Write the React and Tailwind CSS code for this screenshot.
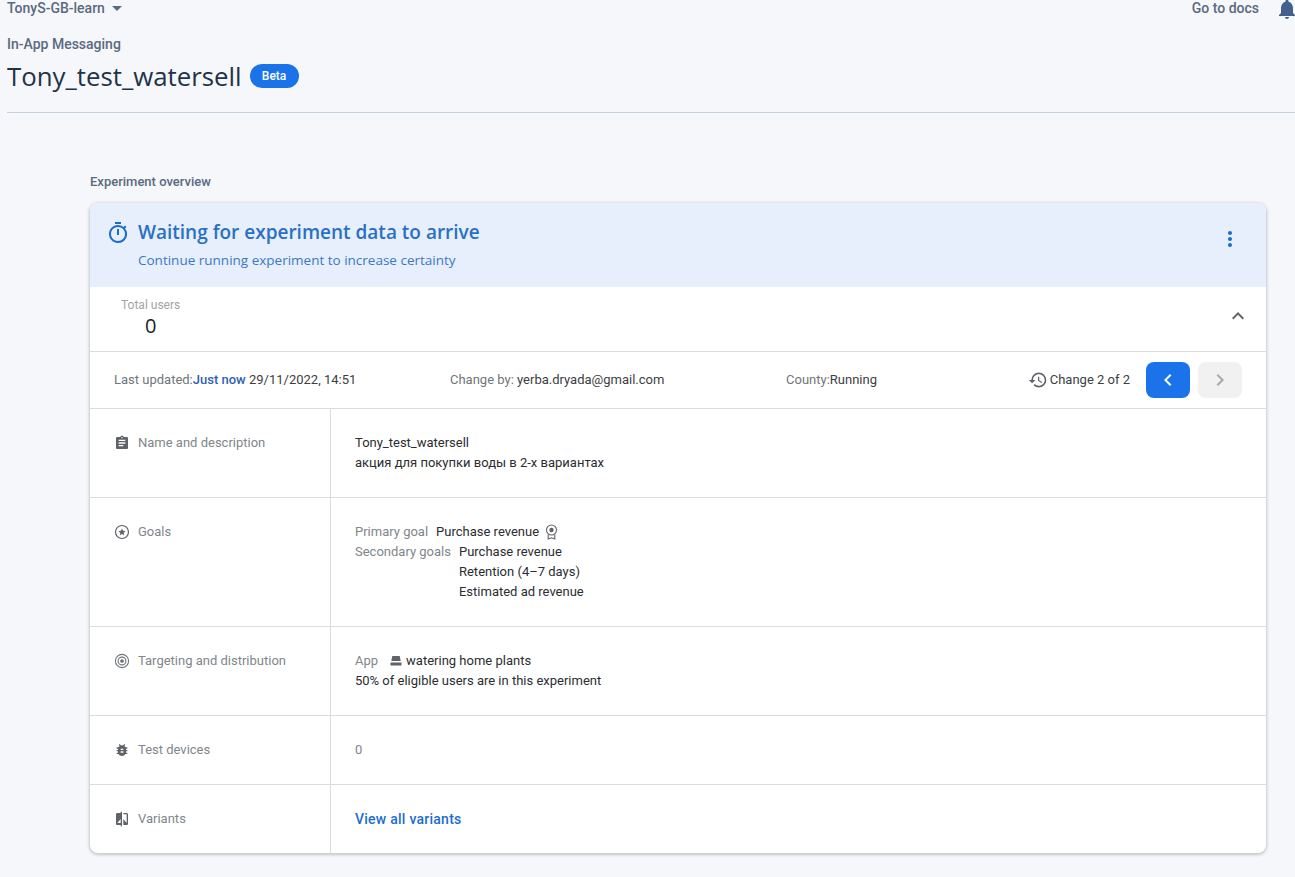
import React from 'react';
import {
  MdArrowDropDown,
  MdNotifications,
  MdOutlineTimer,
  MdMoreVert,
  MdExpandLess,
  MdHistory,
  MdChevronLeft,
  MdChevronRight,
  MdAssignment,
  MdBugReport,
  MdCompare
} from 'react-icons/md';

const GoalsIcon = () => (
  <svg width="16" height="16" viewBox="0 0 16 16" fill="none" stroke="#5f6368">
    <circle cx="8" cy="8" r="6.5" strokeWidth="1.2" />
    <path
      d="M8 4.4l1.05 2.35 2.55.27-1.9 1.7.53 2.5L8 9.95l-2.23 1.27.53-2.5-1.9-1.7 2.55-.27z"
      fill="#5f6368"
      stroke="none"
    />
  </svg>
);

const TargetIcon = () => (
  <svg width="16" height="16" viewBox="0 0 16 16" fill="none" stroke="#70757a" strokeWidth="1.1">
    <circle cx="8" cy="8" r="6.6" />
    <circle cx="8" cy="8" r="3.9" />
    <circle cx="8" cy="8" r="1.3" fill="#70757a" />
  </svg>
);

const MedalIcon = () => (
  <svg width="13" height="16" viewBox="0 0 13 16" fill="none" stroke="#5f6368" strokeWidth="1.1">
    <circle cx="6.5" cy="6" r="5" />
    <circle cx="6.5" cy="6" r="2.2" fill="#5f6368" stroke="none" />
    <path d="M3.2 10.5v4.5l3.3-1.2 3.3 1.2v-4.5" />
  </svg>
);

const AppIcon = () => (
  <svg width="12" height="10" viewBox="0 0 12 10" fill="#5f6368">
    <path d="M2.3 0h7.4l1 5H1.3z" />
    <rect x="0.5" y="6.5" width="11" height="3" />
  </svg>
);

function Row({ icon, label, className, children }) {
  return (
    <div className={`flex border-t border-[#dadce0] ${className}`}>
      <div className="w-[240px] shrink-0 flex items-start gap-[8px] pl-[24px] pt-[24px] text-[13px] leading-[20px] text-[#80868b]">
        <span className="w-[16px] h-[20px] flex items-center justify-center text-[#5f6368]">{icon}</span>
        {label}
      </div>
      <div className="flex-1 border-l border-[#dadce0] pl-[24px] pt-[24px] text-[13px] leading-[20px] text-[#2b2d30]">
        {children}
      </div>
    </div>
  );
}

export default function App() {
  return (
    <div className="min-h-[877px] bg-[#f5f7fa] font-['Roboto',sans-serif] overflow-hidden">
      <div className="h-[113px] ml-[7px] border-b border-[#c5d0de]">
        <div className="flex items-start justify-between h-[16px]">
          <div className="flex items-start text-[14px] leading-[16px] font-medium text-[#5a6a80]">
            TonyS-GB-learn
            <MdArrowDropDown className="text-[24px] mt-[-4px]" />
          </div>
          <div className="flex items-start">
            <span className="text-[14px] leading-[16px] font-medium text-[#5a6a80]">Go to docs</span>
            <MdNotifications className="ml-[16px] mt-[-3px] mr-[-4px] text-[24px] text-[#42618c] shrink-0" />
          </div>
        </div>
        <div className="mt-[20px] text-[14px] leading-[16px] font-medium text-[#5a6a80]">In-App Messaging</div>
        <div className="mt-[8px] flex items-center">
          <span className="font-['Open_Sans',sans-serif] font-medium text-[25.8px] leading-[32px] text-[#1f3349]">Tony_test_watersell</span>
          <span className="ml-[8px] h-[24px] w-[49px] rounded-full bg-[#1a73e8] text-white text-[12px] font-medium flex items-center justify-center">
            Beta
          </span>
        </div>
      </div>

      <div className="ml-[90px] w-[1176px] mt-[61px]">
        <div className="text-[13px] leading-[16px] font-medium text-[#5a6a80]">Experiment overview</div>
        <div className="mt-[13px] bg-white rounded-[8px] shadow-[0_1px_3px_1px_rgba(60,64,67,0.25)] overflow-hidden">
          <div className="h-[84px] bg-[#e6effb] flex items-start pl-[16px] pr-[24px]">
            <MdOutlineTimer className="text-[24px] text-[#1a6dd0] mt-[18px] shrink-0" />
            <div className="ml-[8px] flex-1">
              <div className="mt-[17px] font-['Open_Sans',sans-serif] font-semibold text-[19px] leading-[24px] text-[#2a6fc4]">
                Waiting for experiment data to arrive
              </div>
              <div className="mt-[6px] text-[13.5px] leading-[20px] text-[#3c78c8] font-['Open_Sans',sans-serif]">
                Continue running experiment to increase certainty
              </div>
            </div>
            <MdMoreVert className="text-[24px] text-[#1a6dd0] mt-[24px]" />
          </div>

          <div className="h-[64px] flex items-start justify-between pr-[16px]">
            <div className="ml-[31px] mt-[10px] flex flex-col items-center">
              <span className="text-[12px] leading-[16px] text-[#a0a4a8]">Total users</span>
              <span className="mt-[1px] font-['Open_Sans',sans-serif] text-[20px] leading-[24px] text-[#202124]">0</span>
            </div>
            <MdExpandLess className="text-[24px] text-[#5f6368] mt-[17px]" />
          </div>

          <div className="h-[57px] border-t border-[#dadce0] flex items-center px-[24px] text-[13px] text-[#3c4043]">
            <div className="w-[336px]">
              <span className="text-[#70757a]">Last updated:</span>
              <span className="font-medium text-[#2f5fb3]">Just now</span> 29/11/2022, 14:51
            </div>
            <div className="w-[336px]">
              <span className="text-[#70757a]">Change by: </span>yerba.dryada@gmail.com
            </div>
            <div className="flex-1">
              <span className="text-[#70757a]">County:</span>Running
            </div>
            <MdHistory className="text-[20px] text-[#5f6368] mr-[2px]" />
            <span>Change 2 of 2</span>
            <button className="ml-[16px] w-[44px] h-[36px] rounded-[8px] bg-[#1a73e8] text-white flex items-center justify-center">
              <MdChevronLeft className="text-[24px]" />
            </button>
            <button className="ml-[8px] w-[44px] h-[36px] rounded-[8px] bg-[#f1f1f1] text-[#a8a8a8] flex items-center justify-center">
              <MdChevronRight className="text-[24px]" />
            </button>
          </div>

          <Row className="h-[89px]" icon={<MdAssignment className="text-[16px]" />} label="Name and description">
            <div>Tony_test_watersell</div>
            <div>акция для покупки воды в 2-х вариантах</div>
          </Row>

          <Row className="h-[129px]" icon={<GoalsIcon />} label="Goals">
            <div className="flex items-center">
              <span className="text-[#80868b] mr-[8px]">Primary goal</span>
              Purchase revenue
              <span className="ml-[6px] flex"><MedalIcon /></span>
            </div>
            <div className="flex">
              <span className="text-[#80868b] mr-[8px]">Secondary goals</span>
              <div>
                <div>Purchase revenue</div>
                <div>Retention (4–7 days)</div>
                <div>Estimated ad revenue</div>
              </div>
            </div>
          </Row>

          <Row className="h-[89px]" icon={<TargetIcon />} label="Targeting and distribution">
            <div className="flex items-center">
              <span className="text-[#80868b] mr-[12px]">App</span>
              <span className="mr-[4px] flex"><AppIcon /></span>
              watering home plants
            </div>
            <div>50% of eligible users are in this experiment</div>
          </Row>

          <Row className="h-[69px]" icon={<MdBugReport className="text-[16px]" />} label="Test devices">
            <span className="text-[#80868b]">0</span>
          </Row>

          <Row className="h-[69px]" icon={<MdCompare className="text-[16px]" />} label="Variants">
            <span className="text-[14px] tracking-[0.25px] font-medium text-[#1a6dd0]">View all variants</span>
          </Row>
        </div>
      </div>
    </div>
  );
}
